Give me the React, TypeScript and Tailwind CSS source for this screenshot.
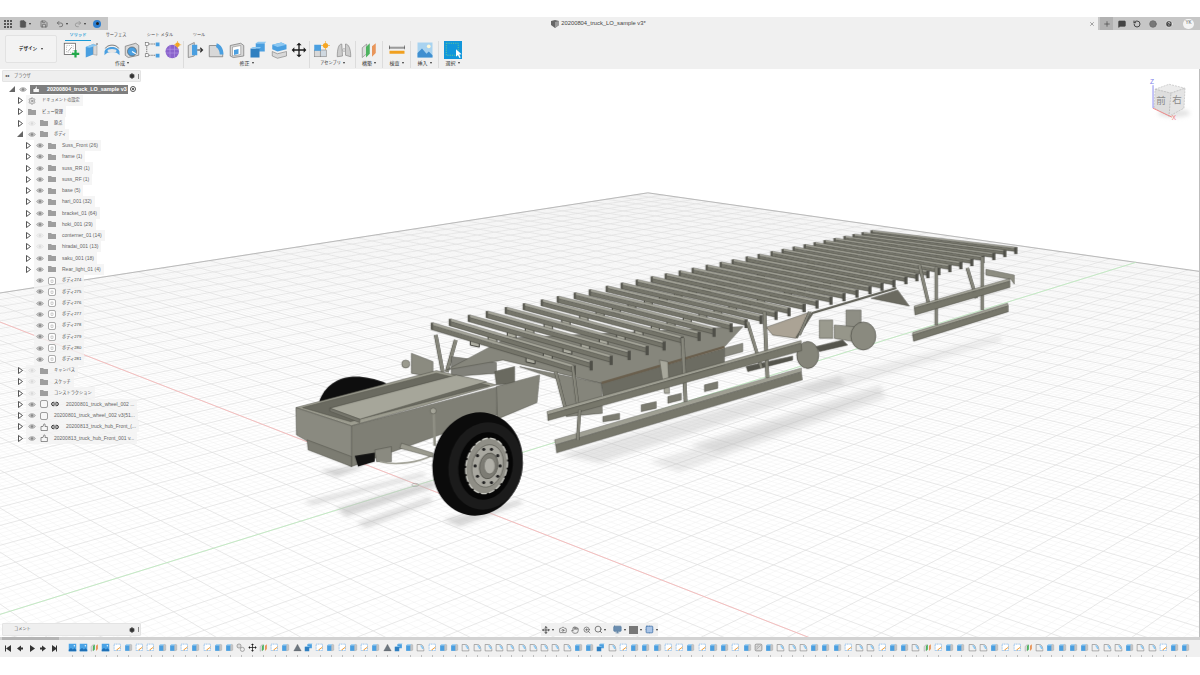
import React from "react";
import { Settings, Link2, Hand, Search, ZoomIn, Move, Save, File, Undo2, Redo2, Monitor, Grid2x2, Camera, Plus, MessageSquare, RotateCcw, Clock, HelpCircle, X } from "lucide-react";

const A = 0.0224, B = 0.022;
const P = (u: number, v: number): [number, number] => {
  const w = 1 + A * u + B * v;
  return [(418 - 895 * A * u + 2070 * B * v) / w, (485 - 27 * A * u - 27 * B * v) / w];
};
const seg = (p: [number, number], q: [number, number]) => `M${p[0].toFixed(1)} ${p[1].toFixed(1)}L${q[0].toFixed(1)} ${q[1].toFixed(1)}`;
const UM = 25, VM = 35, WMIN = 0.04;
function gridLines(major: boolean) {
  let d = "";
  for (let i = -UM * 5; i <= UM * 5; i++) {
    if ((i % 5 === 0) !== major) continue;
    const u = i / 5;
    const v0 = Math.max(-VM, (WMIN - 1 - A * u) / B);
    if (v0 < VM) d += seg(P(u, v0), P(u, VM));
  }
  for (let i = -VM * 5; i <= VM * 5; i++) {
    if ((i % 5 === 0) !== major) continue;
    const v = i / 5;
    const u0 = Math.max(-UM, (WMIN - 1 - B * v) / A);
    if (u0 < UM) d += seg(P(u0, v), P(UM, v));
  }
  return d;
}

const zp = (ox: number, oy: number, pts: number[]) => {
  const r: string[] = [];
  for (let i = 0; i < pts.length; i += 2) r.push(`${(ox + pts[i] / 3).toFixed(1)},${(oy + pts[i + 1] / 3).toFixed(1)}`);
  return r.join(" ");
};
const Z7 = (c: string, pts: number[]) => <polygon points={zp(280, 340, pts)} fill={c} stroke="#4a4a43" strokeWidth={0.5} />;
const Z8 = (c: string, pts: number[]) => <polygon points={zp(540, 220, pts)} fill={c} stroke="#4a4a43" strokeWidth={0.5} />;
const Z9 = (c: string, pts: number[]) => <polygon points={zp(780, 210, pts)} fill={c} stroke="#4a4a43" strokeWidth={0.5} />;

const backX = [432, 450, 469, 487, 506, 524, 542, 558, 575, 590, 607, 622, 637, 652, 666, 680, 693, 707, 721, 733, 747, 759, 772, 783, 794, 805, 815, 825, 835, 845, 854, 863, 872];
const frontX = [575, 592, 612, 630, 648, 665, 683, 700, 715, 732, 747, 762, 777, 790, 805, 818, 832, 845, 858, 871, 883, 895, 907, 918, 929, 940, 951, 962, 973, 984, 995, 1006, 1017];

function Rib({ i }: { i: number }) {
  const bx = backX[i], fx = frontX[i];
  const by = 325 - 0.212 * (bx - 432), fy = 368 - 0.27 * (fx - 575);
  const k = 1 - (i / 32) * 0.4;
  const h = 4.6 * k, t = 2.4 * k;
  const at = (f: number): [number, number] => [bx + (fx - bx) * f, by + (fy - by) * f];
  const [s1x, s1y] = at(0.27);
  const [s2x, s2y] = at(0.66);
  const sw = 9 * k, sh = 5 * k;
  return (
    <g>
      {[[s1x, s1y], [s2x, s2y]].map(([x, y], n) => (
        <path key={n} d={`M${x} ${y + h - 1}l0 ${sh}l${sw} ${sw * 0.22}l0 ${-sh}`} fill="#b0b0a4" stroke="#3a3a34" strokeWidth={1} />
      ))}
      <polygon points={`${bx},${by} ${fx},${fy} ${fx},${fy + h} ${bx},${by + h}`} fill="#75756a" stroke="#3f3f39" strokeWidth={0.5} />
      <polygon points={`${bx},${by} ${fx},${fy} ${fx + 1},${fy - t} ${bx + 1},${by - t}`} fill="#a6a69a" stroke="#4a4a43" strokeWidth={0.4} />
      <rect x={fx - 2} y={fy - t} width={3.2} height={h + t + 2.5} fill="#4f4f48" />
      <rect x={bx - 1} y={by - t} width={2.4} height={h + t} fill="#5c5c54" />
    </g>
  );
}

function Strut({ x1, y1, x2, y2, w = 3 }: { x1: number; y1: number; x2: number; y2: number; w?: number }) {
  return (
    <g>
      <line x1={x1} y1={y1} x2={x2} y2={y2} stroke="#45453f" strokeWidth={w + 0.8} />
      <line x1={x1} y1={y1} x2={x2} y2={y2} stroke="#87877c" strokeWidth={w} />
    </g>
  );
}

function Model() {
  return (
    <g>
      <g filter="url(#bl)" fill="#bdbdbd">
        <polygon points={zp(280, 340, [70, 487, 430, 398, 440, 408, 100, 495])} opacity={0.5} />
        <polygon points={zp(280, 340, [170, 505, 460, 420, 470, 440, 200, 530])} opacity={0.6} />
        <polygon points={zp(280, 340, [230, 550, 450, 470, 460, 485, 260, 565])} opacity={0.5} />
        <polygon points={zp(280, 340, [120, 392, 215, 382, 260, 380, 170, 410])} opacity={0.7} />
        <polygon points={zp(280, 340, [490, 540, 720, 480, 730, 490, 540, 560])} opacity={0.6} />
        <polygon points="560,455 840,375 846,384 600,463" opacity={0.4} />
        <polygon points="650,462 880,392 888,398 680,472" opacity={0.3} />
        <polygon points="800,385 1000,335 1003,341 820,394" opacity={0.25} />
        <polygon points="690,445 880,385 886,392 720,452" opacity={0.35} />
      </g>
      <path d={`M${280 + 118 / 3} ${340 + 185 / 3}C${280 + 140 / 3} ${340 + 120 / 3} ${280 + 210 / 3} ${340 + 85 / 3} ${280 + 320 / 3} ${340 + 130 / 3}L${280 + 200 / 3} ${340 + 190 / 3}Z`} fill="#0e0e0e" />
      {Z7("#8b8b80", [395, 40, 460, 65, 460, 112, 395, 100])}
      <circle cx={280 + 378 / 3} cy={340 + 72 / 3} r={4} fill="#9a9a8e" stroke="#45453f" strokeWidth={0.5} />
      <Strut x1={436} y1={335} x2={443} y2={372} />
      <Strut x1={456} y1={340} x2={447} y2={372} />
      {Z7("#81817a", [515, 50, 650, 68, 650, 100, 515, 110])}
      {Z8("#86867c", [-280, 450, -100, 355, 610, 320, 555, 380, 185, 490, -110, 420])}
      {Z8("#6c6c62", [185, 490, 555, 385, 555, 445, 190, 530])}
      <line x1={602} y1={383} x2={725} y2={347} stroke="#6a5f4d" strokeWidth={2.5} />
      {Z8("#85857b", [-60, 440, 185, 490, 188, 580, 80, 590, 60, 480])}
      {Z8("#a8a89c", [360, 420, 385, 425, 390, 520, 375, 520])}
      {Z8("#8a8a80", [555, 385, 610, 370, 610, 395, 555, 410])}
      {Z8("#55554d", [620, 440, 760, 408, 760, 420, 625, 455])}
      {Z8("#7b7b70", [495, 495, 535, 485, 535, 505, 495, 515])}
      {Z8("#7b7b70", [385, 530, 425, 520, 425, 540, 385, 550])}
      {Z8("#7b7b70", [305, 555, 350, 545, 350, 565, 305, 575])}
      {Z8("#7b7b70", [190, 590, 240, 580, 240, 598, 190, 606])}
      {Z8("#aba395", [680, 322, 815, 275, 770, 355, 700, 345])}
      {Z9("#8e8e84", [200, 300, 245, 300, 245, 350, 200, 350])}
      {Z9("#96968a", [165, 345, 225, 350, 225, 395, 165, 385])}
      {Z9("#9a9a8e", [120, 330, 160, 330, 160, 385, 120, 385])}
      {Z9("#55554d", [110, 410, 190, 390, 205, 405, 120, 425])}
      <ellipse cx={780 + 252 / 3} cy={210 + 378 / 3} rx={12.5} ry={14} fill="#8a8a7f" stroke="#3f3f39" strokeWidth={0.6} />
      <ellipse cx={780 + 85 / 3} cy={210 + 435 / 3} rx={11} ry={13.5} fill="#85857a" stroke="#3f3f39" strokeWidth={0.6} />
      {Z9("#6b6a60", [275, 265, 355, 240, 390, 288])}
      <path d="M797 338L813 313L897 288" fill="none" stroke="#5f5f56" strokeWidth={2.2} />
      {Z9("#8d8d81", [620, 178, 705, 195, 705, 222, 695, 208, 620, 195])}
      {backX.map((_, i) => 32 - i).map((i) => <Rib key={i} i={i} />)}
      <Strut x1={573} y1={366} x2={579} y2={412} w={2.5} />
      <Strut x1={556} y1={372} x2={566} y2={410} w={2.5} />
      <Strut x1={683} y1={338} x2={686} y2={402} w={3} />
      <Strut x1={765} y1={312} x2={768} y2={378} w={3} />
      <Strut x1={748} y1={322} x2={762} y2={368} w={2.5} />
      <Strut x1={800} y1={335} x2={810} y2={312} w={2} />
      <Strut x1={920} y1={265} x2={930} y2={307} w={2.6} />
      <Strut x1={937} y1={267} x2={937} y2={325} w={2.6} />
      <Strut x1={968} y1={268} x2={977} y2={298} w={2.6} />
      <Strut x1={983} y1={257} x2={983} y2={310} w={2.6} />
      {Z8("#a0a094", [22, 575, 785, 362, 785, 370, 24, 585])}
      {Z8("#77776b", [24, 585, 785, 370, 787, 392, 25, 602])}
      <polygon points="555,440 802,368 802,372 556,445" fill="#a0a094" stroke="#4a4a43" strokeWidth={0.4} />
      <polygon points="556,445 802,372 803,380 557,453" fill="#77776b" stroke="#4a4a43" strokeWidth={0.4} />
      <Strut x1={580} y1={410} x2={578} y2={440} w={2.5} />
      {Z9("#a0a094", [405, 288, 690, 206, 692, 214, 405, 295])}
      {Z9("#77776b", [405, 295, 692, 214, 692, 232, 407, 315])}
      {Z9("#a0a094", [400, 368, 685, 280, 687, 288, 400, 376])}
      {Z9("#77776b", [400, 376, 687, 288, 687, 305, 403, 394])}
      {Z7("#9d9d90", [48, 203, 470, 92, 650, 135, 215, 258])}
      {Z7("#6a6a60", [68, 203, 470, 100, 630, 137, 212, 245])}
      {Z7("#a6a69a", [150, 205, 530, 105, 620, 125, 240, 238])}
      {Z7("#77776d", [150, 205, 240, 238, 240, 248, 150, 214])}
      {Z7("#6a6a60", [645, 95, 705, 80, 705, 130, 650, 135])}
      {Z7("#84847a", [650, 140, 780, 105, 772, 188, 652, 238])}
      {Z7("#7f7f75", [215, 258, 650, 142, 652, 225, 480, 285, 215, 380])}
      {Z7("#8a8a80", [48, 203, 215, 258, 215, 380, 50, 285])}
      {Z7("#7c7c72", [82, 300, 215, 350, 215, 380, 85, 330])}
      <polygon points={zp(280, 340, [225, 348, 285, 338, 285, 365, 235, 380])} fill="#111" />
      {Z7("#8a8a80", [285, 330, 335, 320, 335, 365, 290, 365])}
      <path d={`M${280 + 300 / 3} ${340 + 365 / 3}C${280 + 350 / 3} ${340 + 378 / 3} ${280 + 420 / 3} ${340 + 368 / 3} ${280 + 460 / 3} ${340 + 345 / 3}`} fill="none" stroke="#9d9d92" strokeWidth={1.6} />
      {Z7("#9a9a8e", [365, 310, 460, 340, 460, 352, 360, 325])}
      <line x1={434} y1={412} x2={435} y2={446} stroke="#8f8f84" strokeWidth={2.6} />
      <circle cx={433.5} cy={411} r={3} fill="#a4a498" stroke="#55554d" strokeWidth={0.6} />
      <g>
        <ellipse cx={478} cy={464} rx={45} ry={52} transform="rotate(12 478 464)" fill="#0b0b0b" />
        <ellipse cx={486} cy={466} rx={37} ry={44} transform="rotate(12 486 466)" fill="#1b1b1b" />
        <ellipse cx={486} cy={466} rx={27} ry={34} transform="rotate(12 486 466)" fill="#060606" />
        <ellipse cx={487} cy={466} rx={20.5} ry={28} transform="rotate(12 487 466)" fill="#8f8e86" />
        <ellipse cx={487} cy={466} rx={20.5} ry={28} transform="rotate(12 487 466)" fill="none" stroke="#c9c9c2" strokeWidth={1.4} strokeDasharray="6 2" />
        <ellipse cx={488} cy={466} rx={15.5} ry={21.5} transform="rotate(12 488 466)" fill="#a9a8a0" stroke="#55554e" strokeWidth={0.6} />
        <ellipse cx={489} cy={466} rx={9} ry={13} transform="rotate(12 489 466)" fill="#7d7c74" stroke="#55554e" strokeWidth={0.8} />
        <ellipse cx={490} cy={466} rx={5.5} ry={8} fill="#b1b0a8" stroke="#66665f" strokeWidth={0.6} />
        {Array.from({ length: 10 }, (_, i) => {
          const t = (i / 10) * Math.PI * 2;
          return <circle key={i} cx={488 + 12.5 * Math.cos(t)} cy={466 + 17.5 * Math.sin(t)} r={1.6} fill="#222" />;
        })}
      </g>
      <ellipse cx={415.5} cy={485} rx={3.5} ry={1.6} fill="none" stroke="#9a9a9a" strokeWidth={0.6} />
    </g>
  );
}

function ViewCube() {
  return (
    <g>
      <ellipse cx={1175} cy={113} rx={16} ry={4} fill="#c8c8c8" opacity={0.5} filter="url(#bl)" />
      <polygon points="1156,89 1170,84 1186,88 1172,93" fill="#ececec" stroke="#aaa" strokeWidth={0.5} strokeDasharray="2 1" />
      <polygon points="1156,89 1172,93 1170,116 1155,108" fill="#dedede" stroke="#aaa" strokeWidth={0.5} strokeDasharray="2 1" />
      <polygon points="1172,93 1186,88 1185,108 1170,116" fill="#e4e4e4" stroke="#aaa" strokeWidth={0.5} strokeDasharray="2 1" />
      <text x={1162} y={104} fontSize={9.5} fill="#8a8a8a" textAnchor="middle" className="font-['Noto_Sans_CJK_JP',sans-serif]">前</text>
      <text x={1178} y={103} fontSize={9.5} fill="#8a8a8a" textAnchor="middle" className="font-['Noto_Sans_CJK_JP',sans-serif]">右</text>
      <line x1={1154} y1={85} x2={1154} y2={108} stroke="#8b8bf0" strokeWidth={1} />
      <line x1={1154} y1={108} x2={1173} y2={117} stroke="#f08b8b" strokeWidth={1} />
      <text x={1153} y={84} fontSize={6.5} fill="#7b7bea" textAnchor="middle" className="font-['Liberation_Sans',sans-serif]">Z</text>
      <text x={1175} y={120} fontSize={6.5} fill="#ee7b7b" textAnchor="middle" className="font-['Liberation_Sans',sans-serif]">X</text>
    </g>
  );
}

function Scene() {
  const redA = P(UM, 0), redB = P(-38, 0), greenA = P(0, VM), greenB = P(0, -30);
  return (
    <svg className="absolute inset-0 h-full w-full" viewBox="0 69 1200 568">
      <defs>
        <filter id="bl" x="-20%" y="-50%" width="140%" height="200%"><feGaussianBlur stdDeviation="2" /></filter>
      </defs>
      <path d={gridLines(false)} stroke="#f1f1f1" strokeWidth={0.5} fill="none" />
      <path d={gridLines(true)} stroke="#dedede" strokeWidth={0.7} fill="none" />
      <path d={seg(P(UM, -VM), P(UM, VM)) + seg(P(UM, VM), P(-5, VM))} stroke="#b4b4b4" strokeWidth={0.9} fill="none" />
      <path d={seg(redA, redB)} stroke="#f6b9b9" strokeWidth={0.9} fill="none" />
      <path d={seg(greenA, greenB)} stroke="#bfeabf" strokeWidth={0.9} fill="none" />
      <Model />
      <ViewCube />
    </svg>
  );
}

/* ---------- ribbon icons ---------- */
function RI({ k, s = 22 }: { k: string; s?: number }) {
  const blue = "#4a9fe0", dk = "#2f7fc0", lt = "#8cc8f2", gr = "#d8d8d8", ln = "#7a7a7a";
  const body: Record<string, React.ReactNode> = {
    sketch: <><rect x="3" y="3" width="15" height="15" fill="#fff" stroke="#555" strokeWidth="1" /><rect x="6" y="6" width="9" height="9" fill="none" stroke="#999" strokeWidth="0.8" strokeDasharray="1.5 1.5" /><path d="M8 14l5-6" stroke="#888" strokeWidth="1" /><path d="M18 12v10M13 17h10" stroke="#22a84a" strokeWidth="3" /></>,
    extrude: <><polygon points="5,8 15,4 15,18 5,22" fill={blue} /><polygon points="15,4 20,6 20,19 15,18" fill={gr} stroke={ln} strokeWidth=".5" /><polygon points="5,8 15,4 20,6 10,9" fill={lt} /><circle cx="20" cy="4" r="1" fill="#444" /></>,
    revolve: <><path d="M2 14C4 6 20 6 22 14L22 19C19 13 5 13 2 19Z" fill={blue} /><path d="M3 10C6 4 18 4 21 10" fill="none" stroke="#555" strokeWidth="1" /><ellipse cx="12" cy="13" rx="6" ry="2.5" fill="#e6e6e6" /></>,
    hole: <><polygon points="3,7 17,3 21,6 21,19 7,22 3,19" fill={gr} stroke={ln} strokeWidth="1" /><circle cx="12" cy="14" r="6" fill={blue} stroke="#666" strokeWidth="1" /><path d="M12 14l5 3" stroke="#fff" strokeWidth="1.5" /></>,
    nodes: <><path d="M5 4h14M5 4v15M5 19h14" stroke="#555" strokeWidth="1" fill="none" strokeDasharray="2 1" /><rect x="3" y="2" width="4" height="4" fill="#fff" stroke="#666" strokeWidth=".8" /><rect x="17" y="2" width="5" height="5" fill={blue} /><rect x="3" y="17" width="4" height="4" fill="#fff" stroke="#666" strokeWidth=".8" /><rect x="17" y="17" width="5" height="5" fill={blue} /></>,
    sphere: <><circle cx="11" cy="14" r="9" fill="#8a63cc" /><path d="M3 11h16M3 16h16M8 5v18M14 5v18" stroke="#b79be6" strokeWidth=".8" /><circle cx="18" cy="5" r="3" fill="#f5a623" /><path d="M18 0v10M13 5h10" stroke="#f5a623" strokeWidth=".8" /></>,
    press: <><polygon points="3,6 11,2 11,20 3,22" fill="#dedede" stroke={ln} strokeWidth="1" /><rect x="8" y="5" width="7" height="14" fill={blue} /><path d="M15 12h7M19 9l3 3-3 3" stroke="#333" strokeWidth="1.6" fill="none" /></>,
    fillet: <><path d="M3 21V6h9C18 6 21 12 21 21Z" fill={gr} stroke={ln} strokeWidth="1" /><path d="M13 3C19 5 22 11 22 18L17 18C17 13 15 10 12 8Z" fill={blue} /></>,
    shell: <><polygon points="3,6 17,3 21,6 21,20 7,22 3,20" fill={gr} stroke={ln} strokeWidth="1" /><polygon points="6,8 17,6 17,18 6,20" fill="#fff" stroke={ln} strokeWidth=".7" /><polygon points="8,12 14,10.5 14,17 8,18.5" fill={blue} /></>,
    combine: <><polygon points="9,3 21,3 21,14 9,14" fill={blue} /><polygon points="9,3 12,1 23,1 21,3" fill={lt} /><polygon points="2,10 14,10 14,22 2,22" fill={dk} /><polygon points="2,10 5,8 16,8 14,10" fill={lt} /></>,
    stack: <><polygon points="3,5 15,2 22,5 22,11 10,14 3,11" fill={blue} /><polygon points="3,5 15,2 22,5 10,8" fill={lt} /><polygon points="3,14 10,17 22,14 22,20 10,23 3,20" fill={gr} stroke={ln} strokeWidth=".8" /></>,
    move: <path d="M12 1l4 4h-3v6h6V8l4 4-4 4v-3h-6v6h3l-4 4-4-4h3v-6H5v3l-4-4 4-4v3h6V5H8z" fill="#1a1a1a" />,
    comp: <><rect x="3" y="12" width="8" height="9" fill={gr} stroke={ln} strokeWidth=".7" /><rect x="11" y="12" width="8" height="9" fill="#cfd8e0" stroke={ln} strokeWidth=".7" /><rect x="3" y="5" width="9" height="8" fill={blue} /><circle cx="18" cy="6" r="3.5" fill="#f5a623" /><path d="M18 0v12M12 6h12" stroke="#f5a623" strokeWidth=".8" /></>,
    joint: <><path d="M3 21C3 10 5 4 9 4L10 20Z" fill="#ccc" stroke={ln} strokeWidth=".8" /><path d="M14 4C18 4 21 10 21 21L14 19Z" fill="#ccc" stroke={ln} strokeWidth=".8" /><circle cx="12" cy="12" r="1.8" fill="#fff" stroke={ln} strokeWidth=".7" /></>,
    plane: <><polygon points="3,9 9,4 9,17 3,22" fill="#ddd" stroke={ln} strokeWidth=".8" /><polygon points="8,8 13,3 13,17 8,22" fill="#4db35f" /><polygon points="16,7 21,3 21,16 16,21" fill="#e8955a" /></>,
    rule: <><rect x="2" y="8" width="20" height="2" fill="#fff" stroke="#666" strokeWidth=".5" /><path d="M2 6v5M22 6v5M2 9h20" stroke="#444" strokeWidth=".8" /><rect x="2" y="13" width="20" height="4" fill="#f0a020" /></>,
    image: <><rect x="2" y="2" width="20" height="20" fill="#a9d3f0" /><circle cx="17" cy="7" r="2.5" fill="#fff8d8" /><path d="M2 22V16l6-6 6 7 3-3 5 5v3z" fill="#3f8fd0" /></>,
    select: <><rect x="0" y="0" width="24" height="24" fill="#1296db" /><rect x="3" y="3" width="16" height="16" fill="none" stroke="#7fd67f" strokeWidth="1" strokeDasharray="1.5 1.5" /><path d="M16 11l0 10 2.5-2.2 2 4 1.8-.9-2-4 3.2-.2z" fill="#fff" /></>,
    sk: <><rect x="3" y="3" width="17" height="17" fill="#fff" stroke="#5aa0e0" strokeWidth="1.6" strokeDasharray="3 1.5" /><path d="M9 19l11-8" stroke="#f09a30" strokeWidth="2.6" /></>,
    ext: <><polygon points="3,6 15,6 15,21 3,21" fill={blue} /><polygon points="3,6 6,3 18,3 15,6" fill={lt} /><polygon points="15,6 18,3 21,5 21,19 15,21" fill="#c8c8c8" stroke={ln} strokeWidth=".5" /></>,
    img: <><rect x="2" y="2" width="20" height="20" fill="#4aa3e6" /><path d="M2 18l6-5 5 4 4-3 5 4v4H2z" fill="#1e6fb5" /><circle cx="17" cy="7" r="2" fill="#e6f4ff" /></>,
    fil: <><path d="M3 21V4h9C18 4 21 11 21 21Z" fill="#f0f0f0" stroke="#777" strokeWidth="1.5" /><path d="M13 5C18 7 20 12 20.5 16L16 16C15 12 14 10 11 8Z" fill={lt} /></>,
    tri: <path d="M12 3L22 21H2Z" fill="#6d7780" stroke="#444" strokeWidth=".6" />,
    pair: <><circle cx="8" cy="8" r="5.5" fill="#ddd" stroke="#666" strokeWidth="1.4" /><circle cx="17" cy="17" r="5.5" fill="#eee" stroke="#666" strokeWidth="1.4" /></>,
    box: <><rect x="3" y="3" width="18" height="18" rx="3" fill="#ddd" stroke="#666" strokeWidth="1.5" /><path d="M6 17L18 6M6 11l6-5" stroke="#666" strokeWidth="1.2" /></>,
  };
  return <svg width={s} height={s} viewBox="0 0 24 24" className="shrink-0">{body[k]}</svg>;
}

function Caret() {
  return <span className="ml-[2px] inline-block h-0 w-0 border-x-[1.5px] border-t-[2px] border-x-transparent border-t-[#333]" />;
}

function Group({ label, w, items, small, border = true }: { label: string; w: string; items: string[]; small?: boolean; border?: boolean }) {
  return (
    <div className={`flex h-full flex-col items-center ${w} ${border ? "border-r border-[#dcdcdc]" : ""}`}>
      <div className="flex h-[18px] w-full items-center justify-around">
        {items.map((k) => (
          <span key={k} className="flex justify-center"><RI k={k} s={k === "move" ? 16 : 18} /></span>
        ))}
      </div>
      <div className={`flex h-[8px] items-center whitespace-nowrap leading-none text-[#333] ${small ? "text-[4.2px]" : "text-[5px]"}`}>{label}<Caret /></div>
    </div>
  );
}

function Ribbon() {
  return (
    <div className="flex h-[39px] bg-[#f0f0f0] pl-[5px]">
      <div className="my-[5px] flex h-[28px] w-[52px] items-center justify-center rounded-[2px] border border-[#e2e2e2] bg-[#f3f3f3] text-[4.6px] font-bold text-[#222]">デザイン<span className="ml-[2px]"><Caret /></span></div>
      <div className="ml-[4px] flex flex-col">
        <div className="flex h-[11px] items-center whitespace-nowrap text-[4.2px] text-[#444]">
          <div className="ml-[4px] flex h-full w-[26px] items-center justify-center border-b-[1.5px] border-[#1a9ad6] font-bold text-[#1a9ad6]">ソリッド</div>
          <div className="ml-[11px] w-[28px] text-center">サーフェス</div>
          <div className="ml-[15px] w-[30px] text-center">シート メタル</div>
          <div className="ml-[14px] w-[20px] text-center">ツール</div>
        </div>
        <div className="flex h-[27px]">
          <Group label="作成" w="w-[123px]" items={["sketch", "extrude", "revolve", "hole", "nodes", "sphere"]} />
          <Group label="修正" w="w-[126px]" items={["press", "fillet", "shell", "combine", "stack", "move"]} />
          <Group label="アセンブリ" small w="w-[46px]" items={["comp", "joint"]} />
          <Group label="構築" w="w-[27px]" items={["plane"]} />
          <Group label="検査" w="w-[28px]" items={["rule"]} />
          <Group label="挿入" w="w-[28px]" items={["image"]} />
          <Group label="選択" w="w-[27px]" border={false} items={["select"]} />
        </div>
      </div>
    </div>
  );
}

function TitleBar() {
  return (
    <div className="flex h-[13px] items-center justify-between bg-[#f0f0f0]">
      <div className="flex h-full w-[108px] items-center bg-[#c6c6c6] pl-[4px] text-[#555]">
        <svg width="8" height="8" viewBox="0 0 8 8" fill="#555"><rect width="2" height="2" /><rect x="3" width="2" height="2" /><rect x="6" width="2" height="2" /><rect y="3" width="2" height="2" /><rect x="3" y="3" width="2" height="2" /><rect x="6" y="3" width="2" height="2" /><rect y="6" width="2" height="2" /><rect x="3" y="6" width="2" height="2" /><rect x="6" y="6" width="2" height="2" /></svg>
        <File size={8} fill="#555" className="ml-[7px]" /><Caret />
        <Save size={8} className="ml-[9px]" />
        <Undo2 size={8} className="ml-[8px]" /><Caret />
        <Redo2 size={8} className="ml-[6px] text-[#888]" /><Caret />
        <span className="ml-[7px] flex h-[8px] w-[8px] items-center justify-center rounded-full bg-[#2d7fd0]"><span className="h-[3px] w-[3px] rounded-full bg-[#222]" /></span>
      </div>
      <div className="flex items-center text-[5.8px] text-[#444]">
        <svg width="8" height="8" viewBox="0 0 8 8" className="mr-[2px]"><polygon points="0,1 4,0 8,1 8,5 4,8 0,5" fill="#666" /><polygon points="4,2 8,1 8,5 4,8" fill="#999" /></svg>
        20200804_truck_LO_sample v3*
      </div>
      <div className="flex h-full items-center">
        <X size={6} className="mr-[3px] text-[#555]" />
        <div className="flex h-full w-[102px] items-center bg-[#c6c6c6] pl-[2px] text-[#444]">
          <span className="flex h-full w-[13px] items-center justify-center bg-[#b2b2b2]"><Plus size={8} /></span>
          <MessageSquare size={8} fill="#444" className="ml-[5px]" />
          <RotateCcw size={8} strokeWidth={3} className="ml-[7px]" />
          <Clock size={8} fill="#777" className="ml-[8px] text-[#666]" />
          <HelpCircle size={8} fill="#444" className="ml-[8px] text-white" />
          <span className="ml-[10px] flex h-[10px] w-[11px] items-center justify-center rounded-full bg-[#f4f4f4] text-[4.5px] text-[#555]">YK</span>
        </div>
      </div>
    </div>
  );
}

/* ---------- browser tree ---------- */
function Eye({ on }: { on: boolean }) {
  return (
    <svg width="8" height="5" viewBox="0 0 16 10" className={on ? "opacity-100" : "opacity-25"}>
      <path d="M1 5C4 0 12 0 15 5C12 10 4 10 1 5Z" fill={on ? "#c4c4c4" : "#ddd"} stroke="#888" strokeWidth="1" />
      <circle cx="8" cy="5" r="2.4" fill="#888" />
    </svg>
  );
}
function Arrow({ open }: { open: boolean }) {
  if (open) return <svg width="6" height="6" viewBox="0 0 6 6"><polygon points="0,6 6,0 6,6" fill="#666" /></svg>;
  return <svg width="5" height="7" viewBox="0 0 5 7"><polygon points="0.5,0.5 4.5,3.5 0.5,6.5" fill="#fff" stroke="#444" strokeWidth="0.9" /></svg>;
}
function Ico({ k }: { k: string }) {
  if (k === "gear") return <Settings size={8} className="text-[#777]" />;
  if (k === "folder") return <svg width="8" height="6" viewBox="0 0 8 6"><path d="M0 0h3l1 1h4v5H0z" fill="#9e9e9e" /></svg>;
  if (k === "body") return <svg width="8" height="8" viewBox="0 0 8 8"><rect x="0.5" y="0.5" width="7" height="7" rx="1.5" fill="#fff" stroke="#777" strokeWidth="0.6" /><rect x="3" y="3" width="2" height="2.5" fill="none" stroke="#888" strokeWidth="0.4" /></svg>;
  if (k === "cube") return <svg width="8" height="8" viewBox="0 0 8 8"><rect x="0.5" y="0.5" width="7" height="7" rx="1.5" fill="#f6f6f6" stroke="#777" strokeWidth="0.7" /></svg>;
  return <svg width="8" height="8" viewBox="0 0 8 8"><path d="M1 3.5h2L4 .8c1.2 0 1.4 1.2 1 2.7h2.4v4H1z" fill="#f6f6f6" stroke="#666" strokeWidth="0.7" /></svg>;
}

function Label({ text, pad }: { text: string; pad: string }) {
  const cjk = /[^\x00-\x7f]/.test(text);
  return <span className={`whitespace-nowrap pr-[3px] ${pad} ${cjk ? "text-[4.2px] text-[#444]" : "text-[5px]"}`}>{text}</span>;
}

type R = { l: string; e: boolean; i: string };
const kids: R[] = [
  { l: "Suss_Front (26)", e: true, i: "folder" }, { l: "frame (1)", e: true, i: "folder" }, { l: "suss_RR (1)", e: true, i: "folder" },
  { l: "suss_RF (1)", e: true, i: "folder" }, { l: "base (5)", e: true, i: "folder" }, { l: "hari_001 (32)", e: true, i: "folder" },
  { l: "bracket_01 (64)", e: true, i: "folder" }, { l: "hoki_001 (29)", e: true, i: "folder" }, { l: "conterner_01 (14)", e: false, i: "folder" },
  { l: "hiradai_001 (13)", e: false, i: "folder" }, { l: "saku_001 (18)", e: true, i: "folder" }, { l: "Rear_light_01 (4)", e: true, i: "folder" },
];
const bodies = ["ボディ274", "ボディ275", "ボディ276", "ボディ277", "ボディ278", "ボディ279", "ボディ280", "ボディ281"];

function TopRow({ open = false, eye, on = true, icon, link, label }: { open?: boolean; eye: boolean; on?: boolean; icon: string; link?: boolean; label: string }) {
  return (
    <div className="flex h-[11.25px] items-center pl-[17px]">
      <span className="flex w-[6px] justify-center"><Arrow open={open} /></span>
      <div className="ml-[3px] flex h-full items-center bg-[#f2f2f2]/80">
        <span className="flex w-[12px] shrink-0 justify-center">{eye ? <Eye on={on} /> : <Ico k={icon} />}</span>
        {eye && <span className="flex w-[11px] shrink-0 justify-center"><Ico k={icon} /></span>}
        {link && <span className="flex w-[12px] shrink-0 justify-center"><Link2 size={8} strokeWidth={3} className="text-[#222]" /></span>}
        <Label text={label} pad={eye ? "pl-[5px]" : "pl-[4px]"} />
      </div>
    </div>
  );
}

function KidRow({ r, arrow }: { r: R; arrow: boolean }) {
  return (
    <div className="flex h-[11.25px] items-center pl-[25px]">
      <span className="flex w-[6px] justify-center">{arrow && <Arrow open={false} />}</span>
      <div className="ml-[3px] flex h-full items-center bg-[#f2f2f2]/80">
        <span className="flex w-[12px] justify-center"><Eye on={r.e} /></span>
        <span className="flex w-[11px] justify-center"><Ico k={r.i} /></span>
        <Label text={r.l} pad="pl-[5px]" />
      </div>
    </div>
  );
}

function Panel({ title, h }: { title: string; h: string }) {
  return (
    <div className={`mx-[2px] flex items-center rounded-[1px] border border-[#e4e4e4] bg-[#efefef] text-[4.2px] text-[#555] ${h}`}>
      <span className="w-[10px] pl-[2px] text-[#333]">{title === "ブラウザ" ? "◂◂" : ""}</span>
      <span className="flex-1 pl-[1px]">{title}</span>
      <Settings size={6} fill="#333" className="text-[#333]" />
      <span className="ml-[3px] mr-[1px] h-[5px] w-px bg-[#888]" />
    </div>
  );
}

function Browser() {
  return (
    <div className="absolute left-0 top-0 w-[143px] pt-[1px] text-[5px] leading-none text-[#666]">
      <Panel title="ブラウザ" h="h-[12px]" />
      <div className="pt-[1.7px]">
        <div className="flex h-[11.25px] items-center pl-[9px]">
          <span className="flex w-[6px] justify-center"><Arrow open /></span>
          <span className="ml-[4px] flex w-[8px] justify-center"><Eye on /></span>
          <div className="ml-[3px] flex h-[9.5px] w-[98px] items-center bg-[#7e7e7e] text-[5.4px] font-bold text-white">
            <span className="mx-[2px] flex"><Ico k="hub" /></span>
            <span className="whitespace-nowrap pl-[5px]">20200804_truck_LO_sample v3</span>
          </div>
          <span className="ml-[2px] flex h-[6px] w-[6px] items-center justify-center rounded-full border border-[#555]"><span className="h-[2px] w-[2px] rounded-full bg-[#333]" /></span>
        </div>
        <TopRow eye={false} icon="gear" label="ドキュメントの設定" />
        <TopRow eye={false} icon="folder" label="ビュー管理" />
        <TopRow eye on={false} icon="folder" label="原点" />
        <TopRow open eye icon="folder" label="ボディ" />
        {kids.map((r) => <KidRow key={r.l} r={r} arrow />)}
        {bodies.map((b) => <KidRow key={b} r={{ l: b, e: true, i: "body" }} arrow={false} />)}
        <TopRow eye on={false} icon="folder" label="キャンバス" />
        <TopRow eye on={false} icon="folder" label="スケッチ" />
        <TopRow eye on={false} icon="folder" label="コンストラクション" />
        <TopRow eye icon="cube" link label="20200801_truck_wheel_002 ..." />
        <TopRow eye icon="cube" label="20200801_truck_wheel_002 v3(51..." />
        <TopRow eye icon="hub" link label="20200813_truck_hub_Front_(..." />
        <TopRow eye icon="hub" label="20200813_truck_hub_Front_001 v..." />
      </div>
    </div>
  );
}

function Comment() {
  return (
    <div className="absolute bottom-[1px] left-0 w-[143px] leading-none">
      <Panel title="コメント" h="h-[13px]" />
    </div>
  );
}

function NavBar() {
  const c = "text-[#555]";
  return (
    <div className="absolute bottom-[1px] left-[541px] flex h-[13px] w-[117px] items-center bg-[#f0f0f0] pl-[1px]">
      <Move size={8} strokeWidth={3} className={c} /><Caret />
      <Camera size={8} className={`ml-[5px] ${c}`} />
      <Hand size={8} className={`ml-[4px] ${c}`} />
      <ZoomIn size={8} className={`ml-[4px] ${c}`} />
      <Search size={9} className={`ml-[3px] ${c}`} /><Caret />
      <Monitor size={9} fill="#6a8db0" className="ml-[7px] text-[#5a7ea0]" /><Caret />
      <span className="ml-[3px] h-[8px] w-[9px] bg-[#777]" /><Caret />
      <Grid2x2 size={9} fill="#a9c4e6" className="ml-[3px] text-[#3a6ea8]" /><Caret />
    </div>
  );
}

/* ---------- timeline ---------- */
const seq = "bbgbsesseesesee" + "pmgsetcsesesetc" + "efseeffffffffffeecfseeessesee" + "sexeff" + "feeesffseefgseeffessgfeeeefffeffseeff";
const tileKey: Record<string, string> = { b: "img", g: "plane", s: "sk", e: "ext", p: "pair", m: "move", t: "tri", c: "combine", f: "fil", x: "box" };

function Timeline() {
  return (
    <div className="flex h-[20px] flex-col bg-[#f0f0f0]">
      <div className="h-[3px] bg-[#d2d2d2]"><div className="ml-[2px] h-full w-[57px] bg-[#b4b4b4]" /></div>
      <div className="flex flex-1 overflow-hidden">
        <div className="flex w-[66.5px] shrink-0 items-center pl-[5px] text-[#333]">
          <svg width="52" height="7" viewBox="0 0 52 7" fill="#333">
            <rect x="0" y="0.5" width="1" height="6" /><polygon points="6,0 1,3.5 6,7" />
            <polygon points="12,3.5 16,0.5 16,6.5" /><rect x="15" y="2.5" width="3" height="2" />
            <polygon points="25,0 30,3.5 25,7" />
            <polygon points="41,3.5 37,0.5 37,6.5" /><rect x="35" y="2.5" width="3" height="2" />
            <polygon points="47,0 52,3.5 47,7" /><rect x="51" y="0.5" width="1" height="6" />
          </svg>
        </div>
        <div className="flex items-center">
          {seq.split("").slice(0, 100).map((c, i) => (
            <span key={i} className="relative flex h-full w-[11.25px] shrink-0 items-center justify-center pb-[2px]">
              <RI k={tileKey[c]} s={9} />
              <span className="absolute bottom-0 left-1/2 h-[2px] w-px bg-[#bdbdbd]" />
            </span>
          ))}
        </div>
      </div>
    </div>
  );
}

export default function App() {
  return (
    <div className="flex h-[675px] w-[1200px] flex-col overflow-hidden bg-white font-['Liberation_Sans','Noto_Sans_CJK_JP',sans-serif] blur-[0.3px]">
      <div className="h-[17px] shrink-0" />
      <TitleBar />
      <Ribbon />
      <div className="relative flex-1 overflow-hidden border-r border-[#bdbdbd]">
        <Scene />
        <Browser />
        <Comment />
        <NavBar />
      </div>
      <Timeline />
      <div className="h-[18px] shrink-0" />
    </div>
  );
}
